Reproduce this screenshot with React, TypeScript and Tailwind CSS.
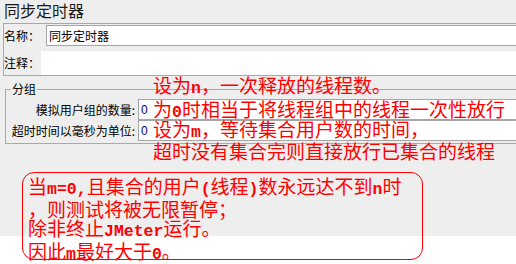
const NOTE_FONT = "font-['Noto_Sans_CJK_SC',sans-serif]"

const FIELDS = [
  { label: "模拟用户组的数量:", value: "0" },
  { label: "超时时间以毫秒为单位:", value: "0" },
]

const BOX_LINES = [
  "当m=0,且集合的用户(线程)数永远达不到n时",
  "，则测试将被无限暂停；",
  "除非终止JMeter运行。",
  "因此m最好大于0。",
]

// latin runs in the notes are set in a bold mono face, like the pasted text
function Note({ text }: { text: string }) {
  const parts = text.split(/([\x20-\x7e]+)/).filter(Boolean)
  return (
    <>
      {parts.map((p, i) =>
        /^[\x20-\x7e]+$/.test(p) ? (
          <span key={i} className="font-['Liberation_Mono',monospace] text-[16.5px] font-bold">
            {p}
          </span>
        ) : (
          <span key={i}>{p}</span>
        )
      )}
    </>
  )
}

export default function App() {
  return (
    <div className="relative h-[264px] w-[516px] overflow-hidden bg-white font-['Noto_Sans_CJK_SC',sans-serif] text-black">
      <div className="h-[236px] bg-[#eeeeee] pl-[3px]">
        <h1 className="pl-[1px] text-[16px] leading-[20px] text-[#1a1a1a]">同步定时器</h1>

        {/* name / comment panel */}
        <div className="mt-[3px] border border-r-0 border-[#a9a9a9] pt-[1px]">
          <div className="flex items-center">
            <span className="w-[42px] text-[12px] leading-[21px]">名称：</span>
            <div className="flex h-[21px] flex-1 items-center border border-r-0 border-[#a5a5a5] bg-white pl-[2px] text-[12px]">
              同步定时器
            </div>
          </div>
          <div className="mt-[5px] flex items-center">
            <span className="w-[37px] text-[12px] leading-[24px]">注释：</span>
            <div className="h-[24px] flex-1 bg-white" />
          </div>
        </div>

        {/* group */}
        <fieldset className="ml-[2px] mt-[6px] border border-r-0 border-[#a9a9a9] pb-[2px] pt-[3px]">
          <legend className="ml-[5px] px-[1px] text-[12px] leading-[14px]">分组</legend>
          {FIELDS.map((f) => (
            <div key={f.label} className="flex items-center">
              <span className="w-[132px] pr-[3px] text-right text-[12px] leading-[21px]">{f.label}</span>
              <div className="flex h-[21px] flex-1 items-center border border-r-0 border-[#a5a5a5] bg-white pl-[2px] font-['Liberation_Sans',sans-serif] text-[12px] text-[#000080]">
                {f.value}
              </div>
            </div>
          ))}
        </fieldset>
      </div>

      {/* red annotations pasted over the form */}
      <div className={`absolute left-[153px] top-[75px] text-[19px] leading-[20px] text-[#ff0000] ${NOTE_FONT}`}>
        <p><Note text="设为n，一次释放的线程数。" /></p>
        <p><Note text="为0时相当于将线程组中的线程一次性放行" /></p>
      </div>
      <div className={`absolute left-[153px] top-[120px] text-[19px] leading-[18px] text-[#ff0000] ${NOTE_FONT}`}>
        <p><Note text="设为m，等待集合用户数的时间，" /></p>
        <p>超时没有集合完则直接放行已集合的线程</p>
      </div>

      <div
        className={`absolute left-[22px] top-[172px] h-[88px] w-[401px] rounded-[12px] border border-[#ff0000] pl-[5px] pt-[3px] text-[19px] leading-[19px] text-[#ff0000] ${NOTE_FONT}`}
      >
        {BOX_LINES.map((line) => (
          <p key={line} className="whitespace-nowrap">
            <Note text={line} />
          </p>
        ))}
      </div>
    </div>
  )
}
